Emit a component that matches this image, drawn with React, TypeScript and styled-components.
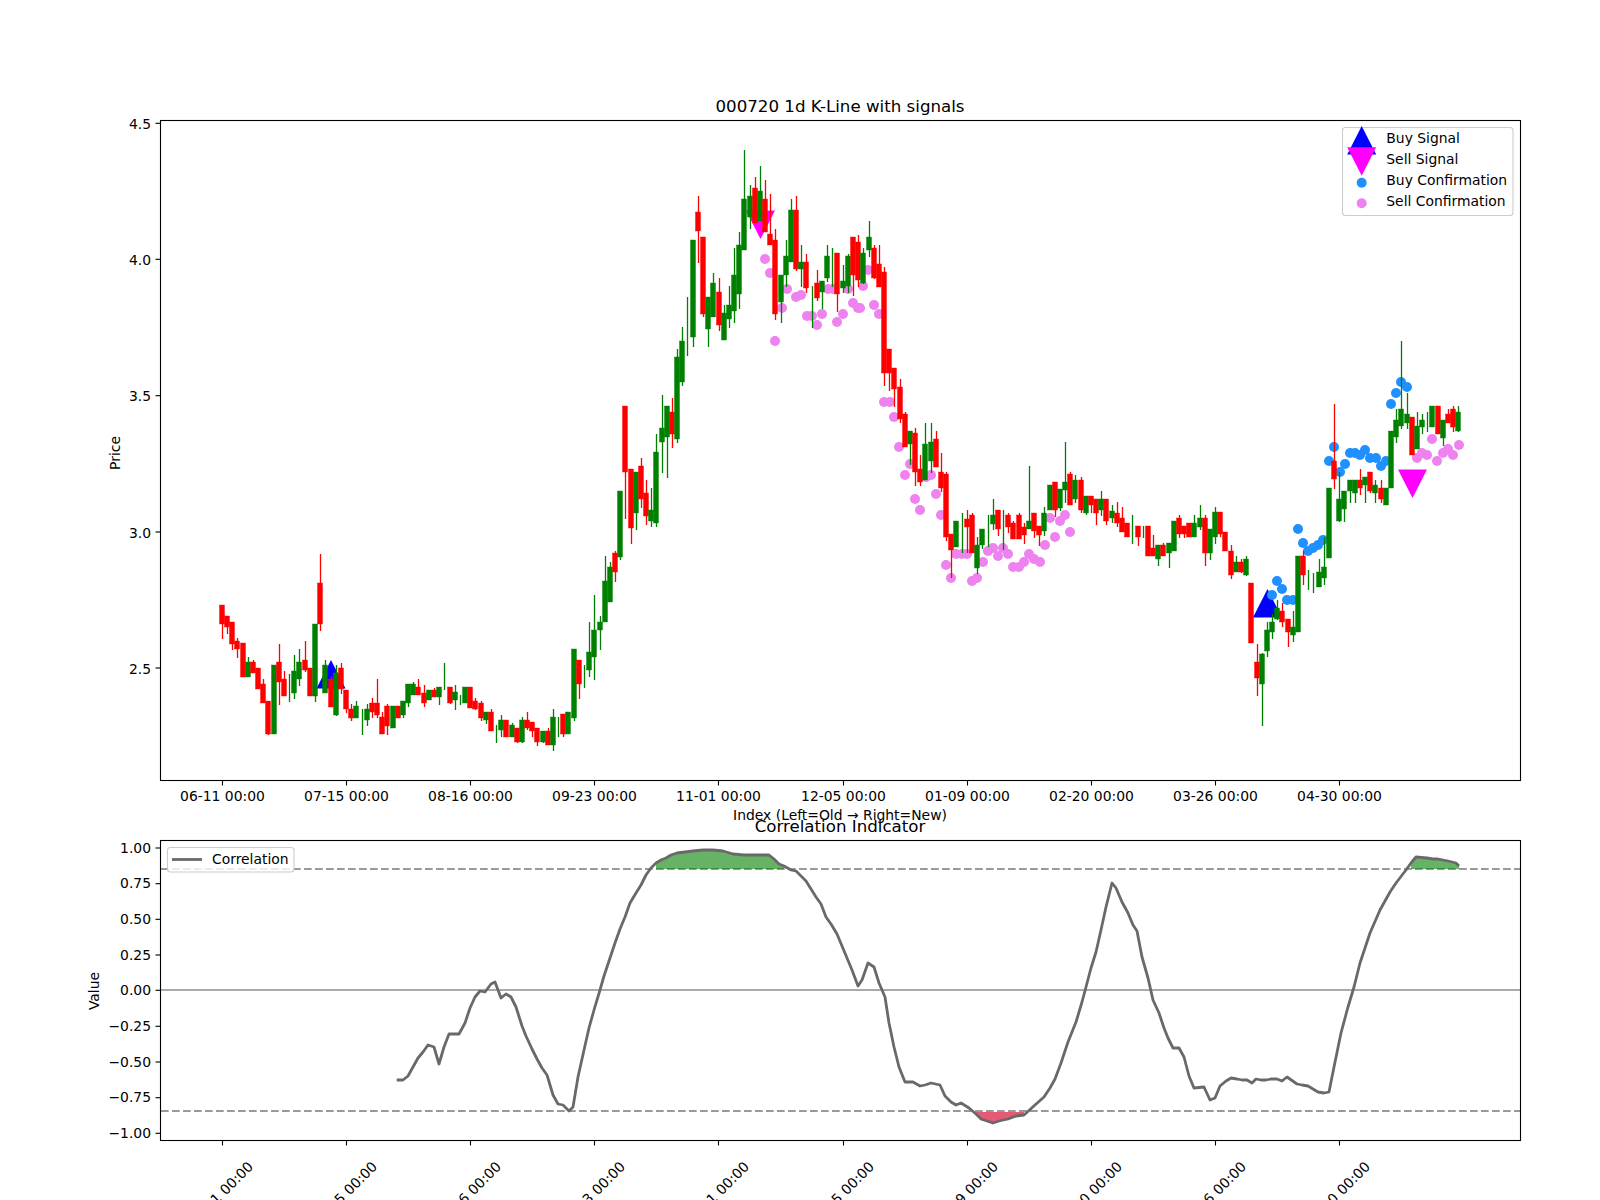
import React from 'react';
import styled, { createGlobalStyle } from 'styled-components';

type Candle = ['r' | 'g', number, number, number, number];
type Point = [number, number];

const X0 = 221.9;
const X_STEP = 5.173;
const TICK_X = [222.5, 346.5, 470.5, 594.5, 718.5, 843.5, 967.5, 1091.5, 1215.5, 1339.5];
const DATES = ['06-11', '07-15', '08-16', '09-23', '11-01', '12-05', '01-09', '02-20', '03-26', '04-30'];

// colour, body top, body bottom, high, low (all in page px)
const CANDLES: Candle[] = [
  ['r',605,624,605,639],['r',616,627,616,634],['r',622,644,622,650],['r',641,649,638,658],['r',643,677,643,677],
  ['g',662,677,657,677],['r',662,673,660,673],['r',668,689,668,689],['r',684,703,679,703],['r',701,734,701,735],
  ['g',665,734,665,734],['r',662,682,644,705],['r',679,696,671,696],['g',674,674,674,702],['g',671,693,655,699],
  ['g',662,679,649,686],['r',660,670,641,672],['r',668,696,668,696],['g',624,696,624,702],['r',583,624,554,631],
  ['g',665,693,660,693],['r',679,707,676,707],['g',673,715,665,716],['r',668,689,663,694],['r',690,709,690,713],
  ['r',709,718,704,721],['g',706,718,701,718],['g',709,709,709,735],['g',709,720,704,726],['r',703,712,698,718],
  ['r',703,715,679,718],['r',717,734,712,734],['r',706,726,704,735],['g',706,728,706,728],['r',706,718,706,718],
  ['g',701,715,701,718],['g',684,703,684,707],['g',684,695,682,695],['r',687,695,679,695],['r',693,703,685,707],
  ['g',690,700,690,700],['r',690,697,688,697],['g',687,697,687,705],['g',663,663,663,690],['r',687,703,687,704],
  ['g',692,700,685,710],['g',695,695,695,705],['g',687,703,687,703],['r',687,708,687,708],['r',701,709,698,710],
  ['r',703,718,701,721],['g',712,720,712,724],['r',712,731,709,731],['g',725,725,725,743],['g',720,730,715,737],
  ['r',720,737,720,737],['g',725,737,723,737],['r',728,742,728,743],['g',720,742,717,743],['r',720,728,712,730],
  ['r',722,731,722,737],['r',728,742,728,746],['g',731,742,731,743],['r',731,745,728,745],['g',717,745,709,751],
  ['g',717,717,717,737],['r',714,734,714,737],['g',712,734,712,734],['g',649,718,649,721],['r',660,684,660,699],
  ['g',665,665,665,688],['g',652,670,622,677],['g',630,657,595,680],['g',622,630,616,650],['g',581,622,556,622],
  ['g',567,602,562,602],['r',553,572,551,582],['g',491,557,491,560],['r',406,472,406,519],['r',469,528,469,544],
  ['g',472,513,472,530],['r',466,499,458,508],['r',493,516,480,525],['g',510,521,488,527],['g',452,523,434,527],
  ['g',428,442,395,473],['g',406,437,406,478],['r',412,434,398,448],['g',357,439,349,443],['g',341,382,327,386],
  ['g',297,297,297,356],['g',240,337,240,347],['r',212,231,196,263],['r',237,314,237,317],['g',297,329,297,347],
  ['g',283,317,273,317],['r',292,325,278,331],['g',313,340,305,340],['g',305,319,286,328],['g',275,311,248,323],
  ['g',245,294,232,309],['g',199,250,150,250],['g',196,217,185,229],['r',188,223,177,223],['g',191,221,166,221],
  ['r',199,232,180,232],['r',234,245,194,245],['r',240,314,229,320],['g',275,302,275,323],['g',256,275,240,287],
  ['g',210,262,199,262],['r',210,269,196,271],['g',262,269,245,287],['r',262,288,254,293],['g',286,286,286,328],
  ['r',283,298,270,301],['g',281,292,281,309],['g',256,278,245,282],['g',248,248,248,287],['r',253,294,253,312],
  ['g',281,288,265,293],['g',256,286,254,293],['r',237,275,237,296],['r',242,280,235,287],['g',253,283,248,284],
  ['g',237,250,221,257],['r',248,278,245,279],['r',264,287,245,287],['r',272,373,267,386],['r',349,373,349,391],
  ['r',368,389,368,407],['r',387,419,379,423],['r',414,447,412,447],['g',431,444,431,465],['r',433,472,428,486],
  ['r',469,482,455,486],['g',444,480,423,480],['g',442,461,423,473],['r',439,467,431,467],['r',472,488,453,492],
  ['r',474,537,472,541],['r',534,550,534,578],['g',521,547,521,547],['g',513,513,513,553],['r',519,527,510,553],
  ['r',515,553,513,553],['g',545,568,537,574],['g',529,545,529,549],['g',515,515,515,547],['g',515,524,499,530],
  ['r',510,529,510,536],['g',510,510,510,550],['r',515,527,513,533],['r',523,539,521,539],['r',515,539,513,539],
  ['r',527,535,523,544],['g',521,529,466,529],['r',513,531,513,538],['r',526,535,526,546],['g',513,531,507,536],
  ['g',485,510,485,510],['r',482,510,482,517],['g',489,508,489,511],['g',482,490,442,503],['r',474,505,472,505],
  ['g',480,499,475,503],['r',480,510,477,513],['g',496,513,496,515],['r',496,505,496,513],['r',499,513,499,525],
  ['g',499,510,491,516],['r',499,521,499,525],['g',511,518,505,523],['r',513,523,502,527],['r',518,532,507,532],
  ['r',523,537,523,537],['g',515,515,515,544],['r',526,537,526,546],['g',526,526,526,538],['r',526,556,526,556],
  ['r',548,556,535,556],['g',545,559,545,566],['r',545,556,543,556],['g',543,553,543,568],['g',521,551,521,551],
  ['r',518,534,515,538],['r',526,534,526,538],['r',523,537,523,537],['g',523,537,515,537],['g',518,527,505,530],
  ['r',518,553,515,566],['g',529,553,529,560],['g',512,537,507,544],['r',512,534,512,537],['r',532,551,532,551],
  ['r',551,575,545,579],['g',562,572,556,572],['r',562,572,559,573],['g',559,575,556,576],['r',583,643,583,643],
  ['r',662,678,644,696],['g',654,684,653,726],['g',630,651,622,657],['g',622,632,614,639],['g',608,619,600,620],
  ['r',611,622,603,627],['r',619,632,619,647],['g',627,635,611,642],['g',556,632,556,632],['r',556,575,551,585],
  ['g',570,570,570,590],['g',573,573,573,593],['g',572,587,559,587],['g',567,578,537,585],['g',488,558,488,558],
  ['r',461,479,404,489],['g',499,521,472,522],['g',491,509,491,522],['g',480,491,480,503],['g',480,493,480,503],
  ['r',480,488,469,495],['g',477,485,477,503],['r',472,491,472,493],['g',485,493,480,503],['r',488,499,480,503],
  ['g',488,505,488,505],['g',431,488,431,488],['g',420,437,409,443],['g',409,426,341,429],['g',414,423,393,429],
  ['r',417,455,417,455],['g',426,449,412,449],['g',420,427,414,434],['g',412,412,412,432],['g',406,427,406,427],
  ['r',406,434,406,434],['g',420,438,420,446],['r',414,423,409,423],['r',409,427,406,432],['g',412,431,406,432],
];

const SELL_DOTS: Point[] = [
  [765,259],[770,273],[775,341],[782,308],[787,289],[796,297],[801,295],[807,316],[812,316],[817,325],[822,314],
  [828,289],[833,289],[837,322],[843,314],[848,289],[853,303],[858,308],[863,286],[868,270],[874,305],[879,314],
  [860,308],[884,402],[890,402],[894,417],[899,447],[910,464],[905,475],[915,499],[920,510],[926,477],[931,475],
  [936,494],[941,515],[946,565],[951,578],[956,554],[962,554],[967,554],[972,581],[977,578],[983,562],[988,551],
  [993,548],[998,556],[1003,548],[1008,554],[1013,567],[1019,567],[1024,562],[1029,554],[1034,559],[1040,562],
  [1045,545],[1050,518],[1055,537],[1060,521],[1065,515],[1070,532],[1417,458],[1422,453],[1427,455],[1432,439],
  [1437,461],[1443,453],[1448,449],[1453,455],[1459,445],
];

const BUY_DOTS: Point[] = [
  [1272,595],[1277,581],[1282,589],[1287,600],[1293,600],[1298,529],[1303,543],[1308,551],[1313,548],[1318,545],
  [1323,540],[1329,461],[1334,447],[1340,472],[1345,464],[1350,453],[1355,453],[1360,455],[1365,450],[1370,458],
  [1376,458],[1381,466],[1386,461],[1391,404],[1396,393],[1401,382],[1407,387],
];

// correlation line in page px
const CORR: Point[] = [
  [396.7,1080],[403,1080],[408,1076],[413,1067],[418,1058],[423,1052],[428,1045],[434,1047],[439,1064],[444,1047],
  [449,1034],[454,1034],[459,1034],[465,1023],[470,1008],[475,997],[480,991],[485,992],[491,984],[495,982],
  [501,998],[506,994],[511,997],[516,1007],[522,1026],[526,1036],[532,1049],[537,1059],[542,1068],[547,1075],
  [553,1095],[558,1104],[563,1105],[569,1111],[573,1107],[578,1077],[584,1050],[589,1028],[594,1010],[600,990],
  [604,976],[610,958],[615,943],[620,929],[625,917],[630,903],[636,893],[641,885],[646,875],[651,868],
  [656,863],[661,860],[666,858],[671,855],[677,853],[685,852],[693,851],[703,850],[713,850],[723,851],
  [733,854],[744,855],[754,855],[769,855],[774,859],[779,864],[784,866],[791,870],[796,871],[801,876],
  [806,881],[811,889],[816,897],[821,904],[826,917],[831,924],[837,934],[842,946],[847,958],[852,970],
  [858,986],[862,980],[868,963],[874,967],[879,983],[885,997],[889,1023],[894,1047],[899,1067],[905,1082],
  [913,1082],[920,1086],[925,1085],[931,1083],[940,1085],[945,1096],[951,1102],[956,1105],[961,1103],[969,1108],
  [976,1114],[981,1119],[987,1121],[993,1123],[999,1121],[1008,1119],[1016,1116],[1024,1115],[1035,1105],[1044,1097],
  [1050,1088],[1055,1079],[1061,1063],[1068,1042],[1076,1022],[1082,1002],[1086,987],[1091,968],[1096,952],[1101,930],
  [1106,907],[1112,883],[1116,888],[1122,902],[1128,913],[1133,925],[1137,931],[1142,957],[1148,978],[1153,1000],
  [1159,1013],[1164,1028],[1168,1038],[1173,1048],[1179,1048],[1184,1057],[1189,1076],[1194,1088],[1204,1087],[1210,1100],
  [1215,1098],[1220,1086],[1226,1081],[1231,1078],[1237,1079],[1242,1080],[1247,1080],[1252,1083],[1256,1079],[1261,1080],
  [1266,1080],[1271,1079],[1277,1079],[1282,1081],[1287,1077],[1297,1084],[1302,1085],[1308,1086],[1318,1092],[1324,1093],
  [1329,1092],[1334,1067],[1341,1033],[1348,1007],[1354,987],[1360,963],[1370,933],[1380,910],[1390,892],[1396,883],
  [1406,870],[1411,863],[1416,857],[1427,858],[1433,859],[1438,859],[1448,861],[1456,863],[1459,866],
];

const PRICE_TICKS: [string, number][] = [['4.5',123.3],['4.0',259.3],['3.5',395.7],['3.0',532],['2.5',668]];
const VALUE_TICKS: [string, number][] = [
  ['1.00',848],['0.75',883.7],['0.50',919.3],['0.25',955],['0.00',990.3],
  ['−0.25',1026.3],['−0.50',1062],['−0.75',1097.7],['−1.00',1133.3],
];

const GlobalStyle = createGlobalStyle`
  body {
    margin: 0;
    background: #fff;
  }
`;

const Figure = styled.div`
  display: flex;
  flex-direction: column;
  width: 1600px;
  height: 1200px;
  overflow: hidden;
  background: #fff;
`;

const PriceChart = styled.svg`
  display: block;
  flex-shrink: 0;
  width: 1600px;
  height: 824px;
  overflow: visible;
`;

const IndicatorChart = styled.svg`
  display: block;
  flex-shrink: 0;
  width: 1600px;
  height: 376px;
  overflow: visible;
`;

const Label = styled.text<{ $size?: number; $anchor?: string }>`
  font-family: 'DejaVu Sans', sans-serif;
  font-size: ${(p) => p.$size ?? 13.9}px;
  text-anchor: ${(p) => p.$anchor ?? 'middle'};
  dominant-baseline: central;
  fill: #000;
`;

const Frame = styled.rect`
  fill: none;
  stroke: #000;
  stroke-width: 1.1;
`;

const Tick = styled.line`
  stroke: #000;
  stroke-width: 1.1;
`;

const Wick = styled.line<{ $up: boolean }>`
  stroke: ${(p) => (p.$up ? '#ff0000' : '#008000')};
  stroke-width: 1.3;
`;

const Body = styled.rect<{ $up: boolean }>`
  fill: ${(p) => (p.$up ? '#ff0000' : '#008000')};
  stroke: ${(p) => (p.$up ? '#ff0000' : '#008000')};
  stroke-width: 0.4;
`;

const Dot = styled.circle<{ $kind: 'buy' | 'sell' }>`
  fill: ${(p) => (p.$kind === 'buy' ? '#1e90ff' : '#ee82ee')};
`;

const Marker = styled.polygon<{ $kind: 'buy' | 'sell' }>`
  fill: ${(p) => (p.$kind === 'buy' ? '#0000ff' : '#ff00ff')};
`;

const LegendBox = styled.rect`
  fill: #fff;
  fill-opacity: 0.8;
  stroke: #cccccc;
  stroke-width: 1.1;
`;

const GuideLine = styled.line<{ $solid?: boolean }>`
  stroke: ${(p) => (p.$solid ? '#aaaaaa' : '#999999')};
  stroke-width: 2;
  stroke-dasharray: ${(p) => (p.$solid ? 'none' : '7.7 3.3')};
`;

const CorrLine = styled.polyline`
  fill: none;
  stroke: #696969;
  stroke-width: 2.8;
  stroke-linejoin: round;
`;

const LegendSample = styled.line`
  stroke: #696969;
  stroke-width: 2.8;
`;

const Zone = styled.polygon<{ $bull?: boolean }>`
  fill: ${(p) => (p.$bull ? '#008000' : '#dc143c')};
  fill-opacity: ${(p) => (p.$bull ? 0.6 : 0.7)};
`;

const buyTriangle = (x: number, apex: number) => `${x},${apex} ${x + 14.5},${apex + 28.5} ${x - 14.5},${apex + 28.5}`;
const sellTriangle = (x: number, apex: number) => `${x},${apex} ${x + 14.5},${apex - 28.5} ${x - 14.5},${apex - 28.5}`;

// area between the line and a threshold, for the points inside an x range
const zonePoints = (from: number, to: number, base: number) => {
  const pts = CORR.filter(([x]) => x >= from && x <= to);
  return [...pts, [pts[pts.length - 1][0], base], [pts[0][0], base]].map((p) => p.join(',')).join(' ');
};

const Candles = () => (
  <g>
    {CANDLES.map(([color, top, bottom, high, low], i) => {
      const x = Math.round(X0 + X_STEP * i);
      const up = color === 'r';
      return (
        <g key={i}>
          <Wick $up={up} x1={x + 0.5} x2={x + 0.5} y1={high} y2={low} />
          {bottom > top && <Body $up={up} x={x - 2.5} y={top} width={5} height={bottom - top} />}
        </g>
      );
    })}
  </g>
);

const PricePanel = () => (
  <PriceChart viewBox="0 0 1600 824">
    <Label x={840} y={106} $size={16.67}>000720 1d K-Line with signals</Label>
    <Marker $kind="buy" points={buyTriangle(331, 660)} />
    <Marker $kind="buy" points={buyTriangle(1267.5, 589)} />
    <Marker $kind="sell" points={sellTriangle(760.5, 239)} />
    <Marker $kind="sell" points={sellTriangle(1412.5, 498)} />
    {SELL_DOTS.map(([x, y], i) => <Dot key={i} $kind="sell" cx={x} cy={y} r={5} />)}
    {BUY_DOTS.map(([x, y], i) => <Dot key={i} $kind="buy" cx={x} cy={y} r={5} />)}
    <Candles />
    <Frame x={160.5} y={120.5} width={1360} height={660} />
    {PRICE_TICKS.map(([text, y]) => (
      <g key={text}>
        <Tick x1={155.5} x2={160.5} y1={y} y2={y} />
        <Label x={151} y={y + 0.5} $anchor="end">{text}</Label>
      </g>
    ))}
    {TICK_X.map((x, i) => (
      <g key={x}>
        <Tick x1={x} x2={x} y1={780.5} y2={785.5} />
        <Label x={x} y={796}>{DATES[i]} 00:00</Label>
      </g>
    ))}
    <Label x={840} y={815}>Index (Left=Old → Right=New)</Label>
    <Label x={115} y={453} transform="rotate(-90 115 453)">Price</Label>
    <LegendBox x={1342.5} y={127.5} width={170.5} height={88} rx={3} />
    <Marker $kind="buy" points={buyTriangle(1361.7, 126)} />
    <Marker $kind="sell" points={sellTriangle(1361.7, 175.7)} />
    <Dot $kind="buy" cx={1361.7} cy={182.7} r={5} />
    <Dot $kind="sell" cx={1361.7} cy={203.3} r={5} />
    <Label x={1386.3} y={138.3} $anchor="start">Buy Signal</Label>
    <Label x={1386.3} y={159.3} $anchor="start">Sell Signal</Label>
    <Label x={1386.3} y={180.3} $anchor="start">Buy Confirmation</Label>
    <Label x={1386.3} y={201} $anchor="start">Sell Confirmation</Label>
  </PriceChart>
);

const IndicatorPanel = () => (
  <IndicatorChart viewBox="0 824 1600 376">
    <Label x={840} y={826} $size={16.67}>Correlation Indicator</Label>
    <GuideLine $solid x1={161} x2={1520} y1={990} y2={990} />
    <GuideLine x1={161} x2={1520} y1={869} y2={869} />
    <GuideLine x1={161} x2={1520} y1={1111} y2={1111} />
    <Zone $bull points={zonePoints(656, 785, 869)} />
    <Zone $bull points={zonePoints(1411, 1459, 869)} />
    <Zone points={zonePoints(976, 1025, 1112)} />
    <CorrLine points={CORR.map((p) => p.join(',')).join(' ')} />
    <Frame x={160.5} y={840.5} width={1360} height={300} />
    {VALUE_TICKS.map(([text, y]) => (
      <g key={text}>
        <Tick x1={155.5} x2={160.5} y1={y} y2={y} />
        <Label x={151} y={y - 0.3} $anchor="end">{text}</Label>
      </g>
    ))}
    {TICK_X.map((x, i) => (
      <g key={x}>
        <Tick x1={x} x2={x} y1={1140.5} y2={1145.5} />
        <Label x={x - 2} y={1194} transform={`rotate(-45 ${x - 2} 1194)`}>{DATES[i]} 00:00</Label>
      </g>
    ))}
    <Label x={94} y={991} transform="rotate(-90 94 991)">Value</Label>
    <LegendBox x={167.5} y={847.5} width={126.5} height={24.5} rx={3} />
    <LegendSample x1={172} x2={202} y1={859.5} y2={859.5} />
    <Label x={212} y={858.7} $anchor="start">Correlation</Label>
  </IndicatorChart>
);

export default function App() {
  return (
    <Figure>
      <GlobalStyle />
      <PricePanel />
      <IndicatorPanel />
    </Figure>
  );
}
